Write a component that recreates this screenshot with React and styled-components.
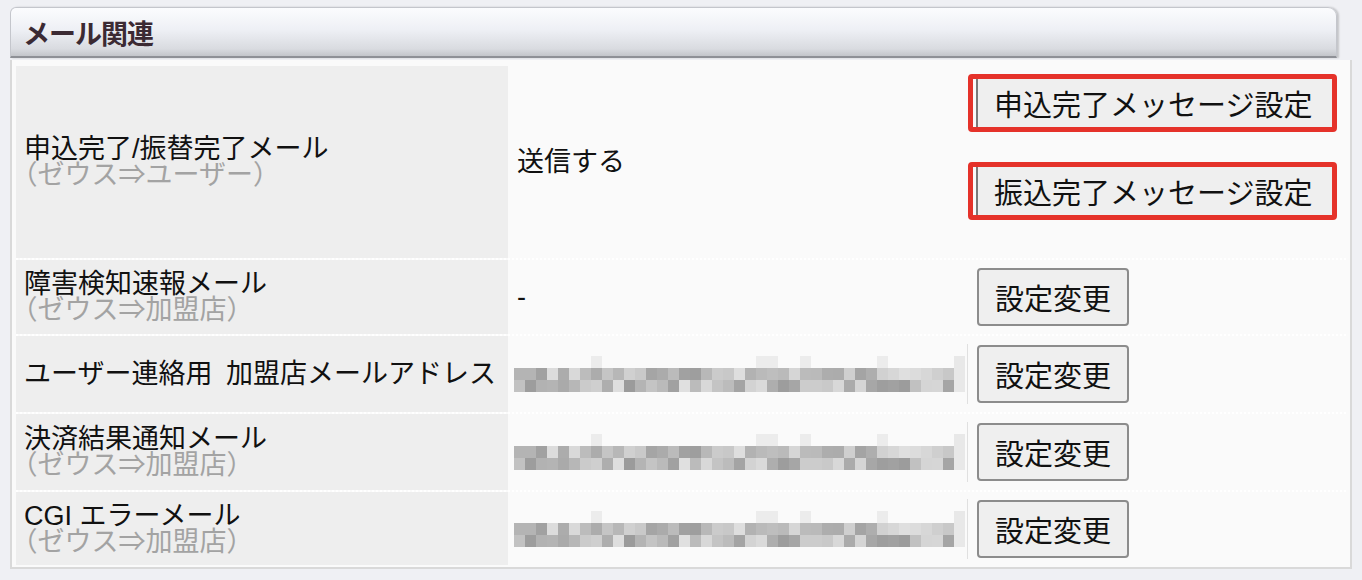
import React from 'react';
import styled, { createGlobalStyle } from 'styled-components';

// ========================================================================================
// ************* 全体 *************
// ========================================================================================
const GlobalStyle = createGlobalStyle`
    html, body {
        margin: 0;
        padding: 0;
        background: #eff0f4;
    }
    body {
        font-family: "Liberation Sans", "Noto Sans CJK JP", sans-serif;
        color: #111;
    }
`;

const Page = styled.div`
    width: 1362px;
    height: 580px;
    padding: 7px 0 0 10px;
    box-sizing: border-box;
    overflow: hidden;
`;
// ----------------------------------------------------------------------------------------


// ========================================================================================
// ************* 見出しバー *************
// ========================================================================================
const SectionHeader = styled.div`
    width: 1327px;
    height: 51px;
    box-sizing: border-box;
    display: flex;
    align-items: center;
    padding-left: 12px;
    border: 1px solid #c4c6cc;
    border-bottom: 2px solid #8e9096;
    border-radius: 6px 9px 0 0;
    background: linear-gradient(to bottom, #fbfcfe 0%, #eef0f5 45%, #d9dbe0 85%, #c3c5ca 100%);
    box-shadow: 2px 0 2px rgba(0, 0, 0, 0.18);
    font-size: 27px;
    font-weight: bold;
    color: #3b2a33;
    letter-spacing: -1px;
`;
// ----------------------------------------------------------------------------------------


// ========================================================================================
// ************* テーブル *************
// ========================================================================================
const Panel = styled.div`
    width: 1342px;
    box-sizing: border-box;
    margin-top: 2px;
    padding: 6px 4px 2px 4px;
    background: #fafafa;
    border: 2px solid #d9d9d9;
    border-top: none;
`;

const Row = styled.div`
    display: grid;
    grid-template-columns: 492px 460px 1fr;
    height: ${(p) => p.$h}px;
    box-sizing: border-box;
    border-top: ${(p) => (p.$first ? 'none' : '2px dotted #ffffff')};
`;

const LabelCell = styled.div`
    background: #eeeeee;
    display: flex;
    flex-direction: column;
    justify-content: center;
    padding-left: 8px;
    font-size: 27px;
    line-height: 26px;
    white-space: nowrap;
`;

const SubLabel = styled.span`
    color: #a3a3a3;
    font-feature-settings: "halt";
`;

const ValueCell = styled.div`
    display: flex;
    align-items: center;
    padding-left: 6px;
    font-size: 27px;
    line-height: 26px;
`;

const ValueText = styled.span`
    padding-left: 3px;
`;

const ActionCell = styled.div`
    display: flex;
    flex-direction: ${(p) => (p.$stack ? 'column' : 'row')};
    align-items: ${(p) => (p.$stack ? 'flex-start' : 'center')};
    padding-top: ${(p) => (p.$stack ? '8px' : '0')};
    gap: 30px;
`;
// ----------------------------------------------------------------------------------------


// ========================================================================================
// ************* ボタン *************
// ========================================================================================
const Button = styled.button`
    margin-left: 9px;
    width: 152px;
    height: 58px;
    padding: 0;
    border: 2px solid #8c8c8c;
    border-radius: 4px;
    background: #efefef;
    font-family: "Liberation Sans", "Noto Sans CJK JP", sans-serif;
    font-size: 29px;
    color: #111;
    cursor: pointer;
`;

const RedMark = styled.span`
    display: inline-flex;
    border: 5px solid #e5322a;
    border-radius: 4px;
    padding-left: 3px;
    background: #fafafa;
`;

const MarkedButton = styled.button`
    width: 356px;
    height: 48px;
    padding: 0 0 0 16px;
    border: none;
    border-left: 2px solid #7a7a7a;
    background: #efefef;
    font-family: "Liberation Sans", "Noto Sans CJK JP", sans-serif;
    font-size: 29px;
    color: #111;
    text-align: left;
    white-space: nowrap;
    cursor: pointer;
`;
// ----------------------------------------------------------------------------------------


// ========================================================================================
// ************* モザイク (メールアドレス) *************
// ========================================================================================
const Mosaic = styled.div`
    width: 455px;
    height: 60px;
    display: grid;
    grid-template-columns: repeat(41, 11px);
    grid-template-rows: repeat(3, 12px);
    align-content: center;
    border-right: 1px solid #e0e0e0;
    box-sizing: border-box;
`;

const Pixel = styled.div`
    background: ${(p) => p.$c};
`;

const pixelRows = (() => {
    let seed = 7;
    const rnd = () => {
        seed = (seed * 9301 + 49297) % 233280;
        return seed / 233280;
    };
    const rows = [];
    for (let r = 0; r < 3; r++) {
        const cells = [];
        for (let c = 0; c < 41; c++) {
            let v;
            if (c === 40) v = 232;
            else if (r === 0) v = rnd() > 0.8 ? 236 : 250;
            else v = Math.round(155 + rnd() * 70);
            cells.push(`rgb(${v},${v},${v})`);
        }
        rows.push(cells);
    }
    return rows;
})();

const BlurredAddress = () => (
    <Mosaic>
        {pixelRows.map((cells, r) =>
            cells.map((c, i) => <Pixel key={r + '-' + i} $c={c} />)
        )}
    </Mosaic>
);
// ----------------------------------------------------------------------------------------


const rows = [
    { h: 76, title: '障害検知速報メール', sub: '（ゼウス⇒加盟店）', value: '-' },
    { h: 78, title: 'ユーザー連絡用\u2002加盟店メールアドレス', blur: true },
    { h: 78, title: '決済結果通知メール', sub: '（ゼウス⇒加盟店）', blur: true },
    { h: 75, title: 'CGI エラーメール', sub: '（ゼウス⇒加盟店）', blur: true },
];

const App = () => {
    return (
        <Page>
            <GlobalStyle />
            <SectionHeader>メール関連</SectionHeader>

            <Panel>
                {/* 申込完了/振替完了メール START */}
                <Row $h={192} $first>
                    <LabelCell>
                        <span>申込完了/振替完了メール</span>
                        <SubLabel>（ゼウス⇒ユーザー）</SubLabel>
                    </LabelCell>
                    <ValueCell>
                        <ValueText>送信する</ValueText>
                    </ValueCell>
                    <ActionCell $stack>
                        <RedMark>
                            <MarkedButton>申込完了メッセージ設定</MarkedButton>
                        </RedMark>
                        <RedMark>
                            <MarkedButton>振込完了メッセージ設定</MarkedButton>
                        </RedMark>
                    </ActionCell>
                </Row>
                {/* 申込完了/振替完了メール END */}

                {rows.map((row) => (
                    <Row key={row.title} $h={row.h}>
                        <LabelCell>
                            <span>{row.title}</span>
                            {row.sub && <SubLabel>{row.sub}</SubLabel>}
                        </LabelCell>
                        <ValueCell>
                            {row.blur ? <BlurredAddress /> : <ValueText>{row.value}</ValueText>}
                        </ValueCell>
                        <ActionCell>
                            <Button>設定変更</Button>
                        </ActionCell>
                    </Row>
                ))}
            </Panel>
        </Page>
    );
};

export default App;
